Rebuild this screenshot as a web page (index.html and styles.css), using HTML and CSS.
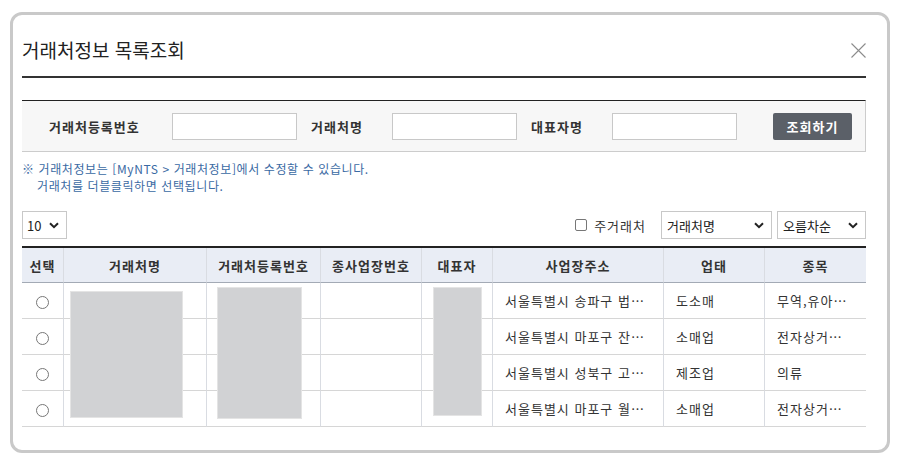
FILE: index.html
```html
<!DOCTYPE html>
<html lang="ko">
<head>
    <meta charset="UTF-8">
    <meta name="viewport" content="width=device-width, initial-scale=1.0">
    <title>거래처정보 목록조회</title>
    <link rel="stylesheet" href="styles.css">
</head>
<body>
    <div class="modal">
        <div class="modal-head">
            <h1 class="modal-title">거래처정보 목록조회</h1>
            <button class="close-btn" aria-label="닫기">
                <svg width="15" height="15" viewBox="0 0 15 15">
                    <path d="M0.5 0.5L14.5 14.5M14.5 0.5L0.5 14.5" stroke="#8c8c8c" stroke-width="1.1" fill="none"/>
                </svg>
            </button>
        </div>

        <div class="search-box">
            <label class="search-label label-wide" for="biz-no">거래처등록번호</label>
            <input class="search-input" type="text" id="biz-no">
            <label class="search-label" for="biz-name">거래처명</label>
            <input class="search-input" type="text" id="biz-name">
            <label class="search-label" for="ceo-name">대표자명</label>
            <input class="search-input" type="text" id="ceo-name">
            <button class="search-btn">조회하기</button>
        </div>

        <div class="notice">
            <p>※ 거래처정보는 [MyNTS &gt; 거래처정보]에서 수정할 수 있습니다.</p>
            <p class="indent">거래처를 더블클릭하면 선택됩니다.</p>
        </div>

        <div class="toolbar">
            <div class="select select-count">
                <span>10</span>
                <svg class="chevron" width="10" height="7" viewBox="0 0 10 7"><path d="M1 1.2L5 5.2L9 1.2" stroke="#222" stroke-width="2" fill="none"/></svg>
            </div>
            <label class="main-check">
                <span class="checkbox"></span>
                <span>주거래처</span>
            </label>
            <div class="select select-field">
                <span>거래처명</span>
                <svg class="chevron" width="10" height="7" viewBox="0 0 10 7"><path d="M1 1.2L5 5.2L9 1.2" stroke="#222" stroke-width="2" fill="none"/></svg>
            </div>
            <div class="select select-order">
                <span>오름차순</span>
                <svg class="chevron" width="10" height="7" viewBox="0 0 10 7"><path d="M1 1.2L5 5.2L9 1.2" stroke="#222" stroke-width="2" fill="none"/></svg>
            </div>
        </div>

        <div class="table-wrap">
            <table class="list-table">
                <colgroup>
                    <col style="width: 42px">
                    <col style="width: 143px">
                    <col style="width: 114px">
                    <col style="width: 101px">
                    <col style="width: 71px">
                    <col style="width: 171px">
                    <col style="width: 101px">
                    <col style="width: 101px">
                </colgroup>
                <thead>
                    <tr>
                        <th>선택</th>
                        <th>거래처명</th>
                        <th>거래처등록번호</th>
                        <th>종사업장번호</th>
                        <th>대표자</th>
                        <th>사업장주소</th>
                        <th>업태</th>
                        <th>종목</th>
                    </tr>
                </thead>
                <tbody>
                    <tr>
                        <td class="center"><span class="radio"></span></td>
                        <td></td><td></td><td></td><td></td>
                        <td>서울특별시 송파구 법…</td>
                        <td>도소매</td>
                        <td>무역,유아…</td>
                    </tr>
                    <tr>
                        <td class="center"><span class="radio"></span></td>
                        <td></td><td></td><td></td><td></td>
                        <td>서울특별시 마포구 잔…</td>
                        <td>소매업</td>
                        <td>전자상거…</td>
                    </tr>
                    <tr>
                        <td class="center"><span class="radio"></span></td>
                        <td></td><td></td><td></td><td></td>
                        <td>서울특별시 성북구 고…</td>
                        <td>제조업</td>
                        <td>의류</td>
                    </tr>
                    <tr>
                        <td class="center"><span class="radio"></span></td>
                        <td></td><td></td><td></td><td></td>
                        <td>서울특별시 마포구 월…</td>
                        <td>소매업</td>
                        <td>전자상거…</td>
                    </tr>
                </tbody>
            </table>
            <!-- masked columns -->
            <div class="mask mask-name"></div>
            <div class="mask mask-regno"></div>
            <div class="mask mask-ceo"></div>
        </div>
    </div>
</body>
</html>
```

FILE: styles.css
```css
body {
    margin: 0;
    background: #ffffff;
    font-family: "Noto Sans CJK KR", "Liberation Sans", sans-serif;
    color: #333;
}

.modal {
    margin: 12px 0 0 10px;
    width: 880px;
    box-sizing: border-box;
    border: 3px solid #c9c9c9;
    border-radius: 12px;
    padding: 0 21px 23px 9px;
    background: #fff;
}

.modal-head {
    display: flex;
    align-items: center;
    justify-content: space-between;
    padding: 23px 0 14px;
    border-bottom: 2px solid #333;
}

.modal-title {
    margin: 0;
    font-size: 19px;
    line-height: 24px;
    font-weight: normal;
    color: #222;
}

.close-btn {
    border: none;
    background: none;
    padding: 0;
    width: 15px;
    height: 15px;
    display: flex;
    cursor: pointer;
}

.search-box {
    margin-top: 22px;
    height: 50px;
    display: flex;
    align-items: center;
    padding: 0 13px 0 27px;
    background: #f7f7f7;
    border-top: 1px solid #222;
    border-bottom: 1px solid #ccc;
    border-right: 1px solid #ccc;
}

.search-label {
    width: 81px;
    font-size: 13px;
    font-weight: bold;
    letter-spacing: 1px;
    color: #333;
}

.label-wide {
    width: 123px;
}

.search-input {
    width: 125px;
    height: 27px;
    box-sizing: border-box;
    border: 1px solid #c8c8c8;
    background: #fff;
    margin-right: 14px;
    padding: 0 5px;
}

.search-btn {
    margin-left: auto;
    width: 79px;
    height: 27px;
    border: none;
    border-radius: 2px;
    background: #5b6068;
    color: #fff;
    font-family: inherit;
    font-size: 13px;
    font-weight: bold;
    letter-spacing: 1px;
    cursor: pointer;
}

.notice {
    margin-top: 8px;
    font-size: 12px;
    line-height: 17px;
    letter-spacing: 0.6px;
    color: #3a6aa3;
}

.notice p {
    margin: 0;
}

.notice .indent {
    padding-left: 15px;
}

.toolbar {
    margin-top: 17px;
    height: 28px;
    display: flex;
    align-items: center;
}

.select {
    height: 28px;
    box-sizing: border-box;
    border: 1px solid #c8c8c8;
    background: #fff;
    display: flex;
    align-items: center;
    justify-content: space-between;
    padding: 0 7px 0 5px;
    font-size: 13px;
    color: #222;
}

.select-count {
    width: 45px;
    padding-left: 4px;
}

.select-field {
    width: 111px;
}

.select-order {
    width: 89px;
    margin-left: 5px;
}

.main-check {
    margin-left: auto;
    margin-right: 15px;
    display: flex;
    align-items: center;
    gap: 7px;
    font-size: 13px;
    letter-spacing: 1px;
    color: #333;
}

.checkbox {
    width: 12px;
    height: 12px;
    box-sizing: border-box;
    border: 1px solid #777;
    border-radius: 2px;
    background: #fff;
}

.table-wrap {
    position: relative;
    margin-top: 7px;
}

.list-table {
    width: 844px;
    table-layout: fixed;
    border-collapse: separate;
    border-spacing: 0;
    border-top: 2px solid #222;
}

.list-table th,
.list-table td {
    padding: 0 12px;
    border-right: 1px solid #d9dce2;
    white-space: nowrap;
    font-size: 13px;
    letter-spacing: 1px;
}

.list-table th:last-child,
.list-table td:last-child {
    border-right: none;
}

.list-table thead tr {
    height: 35px;
}

.list-table th {
    padding: 0 4px;
    background: #e9edf5;
    border-bottom: 1px solid #a3aab5;
    font-weight: bold;
    color: #333;
    text-align: center;
}

.list-table tbody tr {
    height: 36px;
}

.list-table td {
    border-bottom: 1px solid #d6d6d6;
    color: #333;
    text-align: left;
}

.list-table td.center {
    padding: 0;
    text-align: center;
}

.radio {
    display: inline-block;
    width: 13px;
    height: 13px;
    box-sizing: border-box;
    border: 1px solid #777;
    border-radius: 50%;
    vertical-align: middle;
}

.mask {
    position: absolute;
    background: #d1d2d4;
    border: 1px solid #e4e4e4;
    box-sizing: border-box;
}

.mask-name {
    left: 48px;
    top: 45px;
    width: 113px;
    height: 127px;
}

.mask-regno {
    left: 195px;
    top: 41px;
    width: 85px;
    height: 132px;
}

.mask-ceo {
    left: 411px;
    top: 41px;
    width: 49px;
    height: 129px;
}
```
